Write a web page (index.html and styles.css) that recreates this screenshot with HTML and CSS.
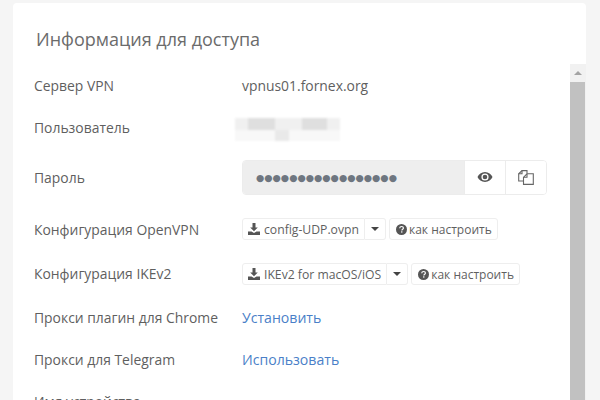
FILE: index.html
```html
<!DOCTYPE html>
<html lang="ru">
<head>
<meta charset="utf-8">
<title>Информация для доступа</title>
<link rel="stylesheet" href="styles.css">
</head>
<body>
<main class="card">
  <h1 class="title">Информация для доступа</h1>
  <div class="panel">
    <div class="content">
      <div class="row row-server"><span class="label">Сервер VPN</span><span class="value">vpnus01.fornex.org</span></div>
      <div class="row row-user"><span class="label">Пользователь</span>
        <div class="blur" aria-hidden="true"><i class="m"></i><i class="d"></i><i class="m"></i><i class="m"></i><i class="d"></i><i class="m"></i><i class="l"></i><i class="l"></i><i class="e"></i><i class="l"></i><i class="l"></i><i class="l"></i></div>
      </div>
      <div class="row row-pass"><span class="label">Пароль</span>
        <div class="pass">
          <div class="pass-field">●●●●●●●●●●●●●●●●●</div>
          <button class="pass-btn"><svg width="16" height="12" viewBox="0 0 16 12"><path d="M8 1C4.500 1 1.800 3.300.5 6 1.800 8.700 4.500 11 8 11s6.200-2.300 7.500-5C14.200 3.300 11.500 1 8 1zm0 8.600A3.600 3.600 0 1 1 8 2.400a3.600 3.600 0 0 1 0 7.200z" fill="#555"/><circle cx="8" cy="6" r="2.300" fill="#555"/></svg></button>
          <button class="pass-btn"><svg width="16" height="15" viewBox="0 0 16 15" fill="none" stroke="#666" stroke-width="1.100"><path d="M9 3.500V.6H4L.7 3.800V11H5.500"/><path d="M4 .6V3.800H.7"/><path d="M5.500 7.300 9 3.800H15.300V14.400H5.500z" fill="#fff"/><path d="M9 3.800V7.300H5.500"/></svg></button>
        </div>
      </div>
      <div class="row row-ovpn"><span class="label">Конфигурация OpenVPN</span>
        <div class="btns">
          <div class="split"><a class="btn"><svg width="12" height="12" viewBox="0 0 12 12"><path d="M4.500 0h3v4.500h2.300L6 8.300 2.200 4.500h2.300zM0 8.500h3.500L6 10l2.500-1.500H12V12H0z" fill="#555"/></svg>config-UDP.ovpn</a><a class="btn caret-btn"><i class="caret"></i></a></div>
          <a class="btn help"><svg width="11" height="11" viewBox="0 0 11 11"><circle cx="5.500" cy="5.500" r="5.500" fill="#555"/><path d="M3.700 4.200C3.800 3.100 4.600 2.500 5.600 2.500c1 0 1.800.6 1.800 1.500 0 1.300-1.500 1.200-1.500 2.400" fill="none" stroke="#fff" stroke-width="1.200"/><rect x="5.100" y="7.300" width="1.300" height="1.300" fill="#fff"/></svg><span class="help-text">как настроить</span></a>
        </div>
      </div>
      <div class="row row-ike"><span class="label">Конфигурация IKEv2</span>
        <div class="btns">
          <div class="split"><a class="btn"><svg width="12" height="12" viewBox="0 0 12 12"><path d="M4.500 0h3v4.500h2.300L6 8.300 2.200 4.500h2.300zM0 8.500h3.500L6 10l2.500-1.500H12V12H0z" fill="#555"/></svg>IKEv2 for macOS/iOS</a><a class="btn caret-btn"><i class="caret"></i></a></div>
          <a class="btn help"><svg width="11" height="11" viewBox="0 0 11 11"><circle cx="5.500" cy="5.500" r="5.500" fill="#555"/><path d="M3.700 4.200C3.800 3.100 4.600 2.500 5.600 2.500c1 0 1.800.6 1.800 1.500 0 1.300-1.500 1.200-1.500 2.400" fill="none" stroke="#fff" stroke-width="1.200"/><rect x="5.100" y="7.300" width="1.300" height="1.300" fill="#fff"/></svg><span class="help-text">как настроить</span></a>
        </div>
      </div>
      <div class="row row-chrome"><span class="label">Прокси плагин для Chrome</span><a class="link">Установить</a></div>
      <div class="row row-tg"><span class="label">Прокси для Telegram</span><a class="link">Использовать</a></div>
      <div class="row row-last"><span class="label">Имя устройства</span></div>
    </div>
    <div class="scrollbar" aria-hidden="true">
      <div class="scroll-up"><i></i></div>
      <div class="scroll-thumb"></div>
    </div>
  </div>
</main>
</body>
</html>
```
FILE: styles.css
```css
* { box-sizing: border-box; }
html, body { margin: 0; height: 400px; overflow: hidden; }
body {
  background: #f5f5f5;
  padding: 3px 14px 0 13px;
  font-family: "Open Sans", "Noto Sans", sans-serif;
  color: #5f5f5f;
}
.card {
  height: 397px;
  background: #fff;
  border-radius: 4px 4px 0 0;
  overflow: hidden;
  display: flex;
  flex-direction: column;
}
.title {
  margin: 0;
  height: 61px;
  padding: 25px 0 0 23px;
  font-size: 18px;
  line-height: 23px;
  font-weight: 400;
  color: #6b6b6b;
}
.panel { flex: 1; display: flex; min-height: 0; }
.content { flex: 1; padding-left: 21px; overflow: hidden; }
.row { display: flex; align-items: center; }
.label { width: 208px; flex: none; font-size: 13.900px; white-space: nowrap; color: #5f5f5f; }
.value { font-size: 13.900px; }
.row-server .label, .row-server .value, .row-user .label, .row-ike .label { padding-bottom: 2px; }
.row-server { height: 44px; }
.row-user { height: 40px; }
.row-pass { height: 58px; }
.row-ovpn { height: 46px; }
.row-ike { height: 44px; }
.row-chrome { height: 43px; }
.row-tg { height: 40px; }
.row-last { height: 45px; }
.blur {
  width: 105px;
  height: 23px;
  display: grid;
  grid-template-columns: 13px 27px 14px 13px 25px 13px;
  grid-template-rows: 12px 11px;
  margin: 2px 0 0 -7px;
  filter: blur(1px);
}
.blur .d { background: #dfdfdf; }
.blur .m { background: #f0f0f0; }
.blur .e { background: #e9e9e9; }
.blur .l { background: #f8f8f8; }
.pass {
  width: 305px;
  height: 35px;
  display: flex;
  border: 1px solid #ececec;
  border-radius: 4px;
  overflow: hidden;
}
.pass-field {
  flex: 1;
  background: #eeeeee;
  padding-left: 13px;
  font-size: 9.500px;
  line-height: 33px;
  color: #6e7680;
  font-family: "DejaVu Sans", sans-serif;
  white-space: nowrap;
  overflow: hidden;
}
.pass-btn {
  width: 41px;
  flex: none;
  background: #fff;
  border: 0;
  border-left: 1px solid #ececec;
  padding: 0;
  display: flex;
  align-items: center;
  justify-content: center;
}
.btns { display: flex; gap: 3px; }
.split { display: flex; }
.btn {
  height: 22px;
  display: flex;
  align-items: center;
  gap: 4px;
  padding: 0 5px;
  background: #fff;
  border: 1px solid #eeeeee;
  border-radius: 3px;
  font-size: 12.200px;
  color: #5f5f5f;
  white-space: nowrap;
}
.split .btn:first-child { border-radius: 3px 0 0 3px; }
.caret-btn { border-left: 0; border-radius: 0 3px 3px 0; padding: 0 6px; }
.caret { width: 0; height: 0; border: 4px solid transparent; border-top-color: #444; border-bottom: 0; }
.help { gap: 2px; padding: 0 5px 0 6px; }
.help-text { font-size: 12px; }
.link { font-size: 14.100px; color: #4a7fc8; text-decoration: none; }
.scrollbar { width: 16px; flex: none; background: #f1f1f1; display: flex; flex-direction: column; }
.scroll-up { height: 18px; display: flex; align-items: center; justify-content: center; }
.scroll-up i { width: 0; height: 0; border: 4px solid transparent; border-bottom-color: #a3a3a3; border-top: 0; }
.scroll-thumb { flex: 1; width: 15px; background: #c1c1c1; }
```
